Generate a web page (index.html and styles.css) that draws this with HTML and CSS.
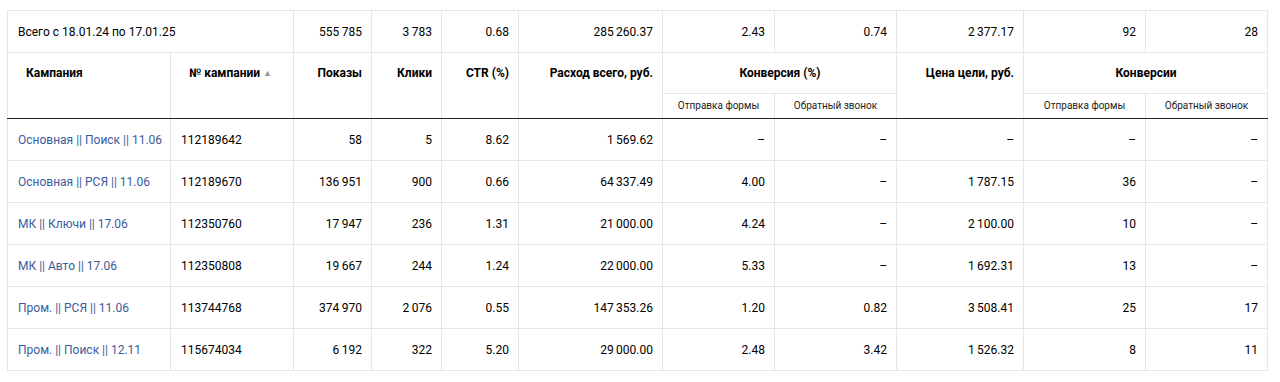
FILE: index.html
```html
<!DOCTYPE html>
<html lang="ru">
<head>
<meta charset="utf-8">
<title>Статистика кампаний</title>
<link rel="stylesheet" href="styles.css">
</head>
<body>
<table class="report">
  <colgroup>
    <col class="c-name"><col class="c-id"><col class="c-shows"><col class="c-clicks"><col class="c-ctr"><col class="c-cost">
    <col class="c-conv1"><col class="c-conv2"><col class="c-price"><col class="c-cnt1"><col class="c-cnt2">
  </colgroup>
  <thead>
    <tr class="total">
      <td colspan="2" class="left">Всего с 18.01.24 по 17.01.25</td>
      <td>555&#8201;785</td><td>3&#8201;783</td><td>0.68</td><td>285&#8201;260.37</td><td>2.43</td><td>0.74</td><td>2&#8201;377.17</td><td>92</td><td>28</td>
    </tr>
    <tr class="head">
      <th rowspan="2" class="left">Кампания</th>
      <th rowspan="2" class="left">№ кампании <span class="sort">▲</span></th>
      <th rowspan="2">Показы</th>
      <th rowspan="2">Клики</th>
      <th rowspan="2">CTR (%)</th>
      <th rowspan="2">Расход всего, руб.</th>
      <th colspan="2" class="center group">Конверсия (%)</th>
      <th rowspan="2">Цена цели, руб.</th>
      <th colspan="2" class="center group">Конверсии</th>
    </tr>
    <tr class="sub">
      <th>Отправка формы</th><th>Обратный звонок</th><th>Отправка формы</th><th>Обратный звонок</th>
    </tr>
  </thead>
  <tbody>
    <tr><td class="left"><a href="#">Основная || Поиск || 11.06</a></td><td class="left">112189642</td><td>58</td><td>5</td><td>8.62</td><td>1&#8201;569.62</td><td>–</td><td>–</td><td>–</td><td>–</td><td>–</td></tr>
    <tr><td class="left"><a href="#">Основная || РСЯ || 11.06</a></td><td class="left">112189670</td><td>136&#8201;951</td><td>900</td><td>0.66</td><td>64&#8201;337.49</td><td>4.00</td><td>–</td><td>1&#8201;787.15</td><td>36</td><td>–</td></tr>
    <tr><td class="left"><a href="#">МК || Ключи || 17.06</a></td><td class="left">112350760</td><td>17&#8201;947</td><td>236</td><td>1.31</td><td>21&#8201;000.00</td><td>4.24</td><td>–</td><td>2&#8201;100.00</td><td>10</td><td>–</td></tr>
    <tr><td class="left"><a href="#">МК || Авто || 17.06</a></td><td class="left">112350808</td><td>19&#8201;667</td><td>244</td><td>1.24</td><td>22&#8201;000.00</td><td>5.33</td><td>–</td><td>1&#8201;692.31</td><td>13</td><td>–</td></tr>
    <tr><td class="left"><a href="#">Пром. || РСЯ || 11.06</a></td><td class="left">113744768</td><td>374&#8201;970</td><td>2&#8201;076</td><td>0.55</td><td>147&#8201;353.26</td><td>1.20</td><td>0.82</td><td>3&#8201;508.41</td><td>25</td><td>17</td></tr>
    <tr><td class="left"><a href="#">Пром. || Поиск || 12.11</a></td><td class="left">115674034</td><td>6&#8201;192</td><td>322</td><td>5.20</td><td>29&#8201;000.00</td><td>2.48</td><td>3.42</td><td>1&#8201;526.32</td><td>8</td><td>11</td></tr>
  </tbody>
</table>
</body>
</html>
```

FILE: styles.css
```css
html, body {
  margin: 0;
  padding: 0;
  background: #fff;
}
body {
  padding: 10px 0 0 7px;
  font-family: Roboto, "Liberation Sans", Arial, sans-serif;
  font-size: 12px;
  color: #000;
}
.report {
  border-collapse: collapse;
  table-layout: fixed;
  width: 1261px;
}
.c-name { width: 163px; }
.c-id { width: 123px; }
.c-shows { width: 78px; }
.c-clicks { width: 70px; }
.c-ctr { width: 77px; }
.c-cost { width: 144px; }
.c-conv1 { width: 112px; }
.c-conv2 { width: 122px; }
.c-price { width: 127px; }
.c-cnt1 { width: 122px; }
.c-cnt2 { width: 122px; }

.report td, .report th {
  border: 1px solid #e6e6e6;
  padding: 0 9px 0 10px;
  text-align: right;
  white-space: nowrap;
  overflow: hidden;
}
.report .left { text-align: left; }
.report .center { text-align: center; }

.total { height: 42px; }
.total td { vertical-align: middle; }

.head { height: 41px; }
.head th {
  font-weight: bold;
  vertical-align: top;
  padding-top: 13px;
  line-height: 14px;
}
.head th.left { padding-left: 18px; }
.head th[rowspan] { border-bottom: 1px solid #222; }
.sort {
  color: #999;
  font-size: 9px;
  font-weight: normal;
  vertical-align: 1px;
}
.sub { height: 25px; }
.sub th {
  font-size: 10px;
  line-height: 12px;
  font-weight: normal;
  text-align: center;
  vertical-align: middle;
  padding: 0 4px;
  color: #222;
  border-bottom: 1px solid #222;
}

tbody tr { height: 42px; }
tbody td { vertical-align: middle; }
tbody a {
  color: #3b5b9c;
  text-decoration: none;
}
```
